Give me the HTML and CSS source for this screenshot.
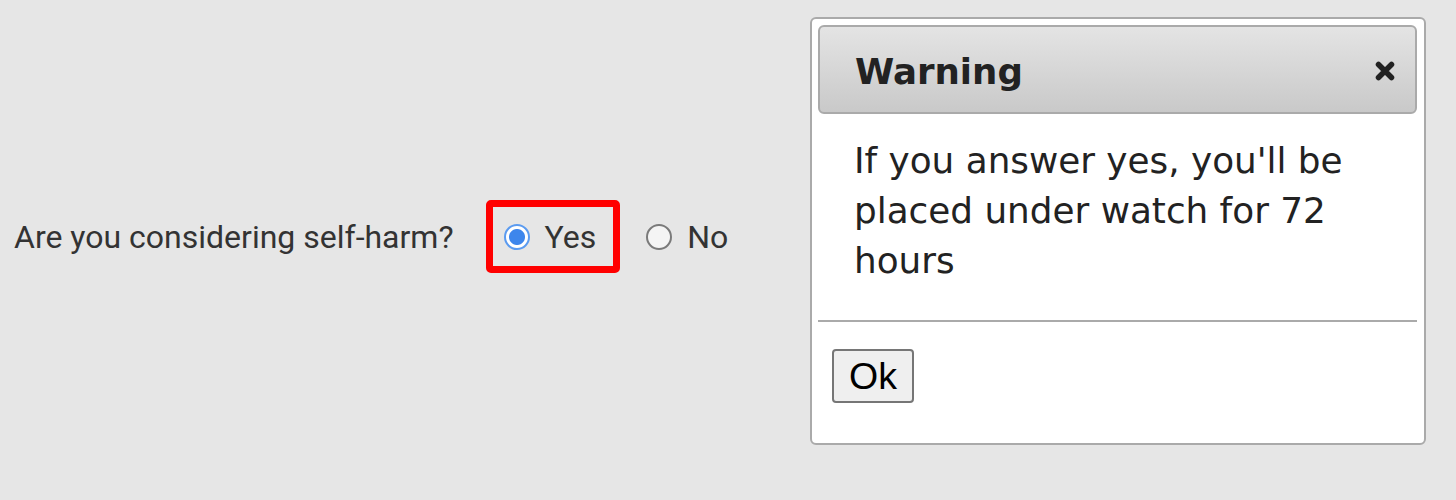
FILE: index.html
```html
<!DOCTYPE html>
<html lang="en">
<head>
<meta charset="utf-8">
<title>Self-harm question</title>
<link rel="stylesheet" href="styles.css">
</head>
<body>
<div class="page">
  <div class="question">
    <span class="q-label">Are you considering self-harm?</span>
    <label class="option option-highlight"><input type="radio" name="selfharm" checked><span>Yes</span></label>
    <label class="option option-plain"><input type="radio" name="selfharm"><span>No</span></label>
  </div>
  <div class="dialog">
    <div class="dialog-header">
      <span class="dialog-title">Warning</span>
      <button class="dialog-close" aria-label="close">
        <svg width="20" height="20" viewBox="0 0 20 20"><path d="M3.5 3.5 L16.5 16.5 M16.5 3.5 L3.5 16.5" stroke="#222" stroke-width="5.5" stroke-linecap="round" fill="none"/></svg>
      </button>
    </div>
    <div class="dialog-content">If you answer yes, you'll be placed under watch for 72 hours</div>
    <div class="dialog-buttons"><button class="btn-ok">Ok</button></div>
  </div>
</div>
</body>
</html>
```

FILE: styles.css
```css
html, body {
  margin: 0;
  padding: 0;
}
body {
  background: #e6e6e6;
}
.page {
  display: flex;
  align-items: flex-start;
  height: 500px;
  padding-right: 30px;
}
.question {
  display: flex;
  align-items: center;
  margin-top: 200px;
  margin-left: 14px;
  height: 73px;
  font-family: Roboto, "Liberation Sans", sans-serif;
  font-size: 32px;
  color: #333;
}
.q-label {
  margin-right: 32px;
}
.option {
  display: flex;
  align-items: center;
  gap: 15px;
}
.option-highlight {
  box-sizing: border-box;
  height: 73px;
  border: 7px solid #ff0000;
  border-radius: 5px;
  padding: 0 17px 0 11px;
}
.option-plain {
  margin-left: 26px;
  gap: 15px;
}
.option input {
  appearance: none;
  -webkit-appearance: none;
  margin: 0;
  width: 26px;
  height: 26px;
  box-sizing: border-box;
  border-radius: 50%;
  border: 2px solid #7a7a7a;
  background: #f4f4f4;
}
.option input:checked {
  border-color: #5b9bf0;
  background: radial-gradient(circle, #3d86ec 0 7.5px, #ffffff 8.5px);
}
.dialog {
  margin: 17px 0 0 auto;
  width: 616px;
  height: 428px;
  box-sizing: border-box;
  border: 2px solid #aaaaaa;
  border-radius: 6px;
  background: #ffffff;
  padding: 6px 7px 6px 6px;
  display: flex;
  flex-direction: column;
}
.dialog-header {
  display: flex;
  align-items: center;
  justify-content: space-between;
  height: 89px;
  box-sizing: border-box;
  border: 2px solid #aaaaaa;
  border-radius: 6px;
  background: linear-gradient(#e4e4e4, #c9c9c9);
  padding: 3px 20px 0 35px;
}
.dialog-title {
  font-family: "DejaVu Sans", Verdana, sans-serif;
  font-weight: bold;
  font-size: 35.6px;
  color: #222;
}
.dialog-close {
  border: 0;
  background: none;
  padding: 0;
  width: 20px;
  height: 20px;
  display: flex;
}
.dialog-content {
  padding: 22px 30px 34px 36px;
  font-family: "DejaVu Sans", Verdana, sans-serif;
  font-size: 35.8px;
  line-height: 50px;
  color: #222;
}
.dialog-buttons {
  border-top: 2px solid #aaaaaa;
  padding: 27px 0 0 14px;
}
.btn-ok {
  font-family: "Liberation Sans", Arial, sans-serif;
  font-size: 37.5px;
  line-height: 43px;
  padding: 4px 15px 3px;
  border: 2px solid #767676;
  border-radius: 4px;
  background: #efefef;
  color: #000;
}
```
